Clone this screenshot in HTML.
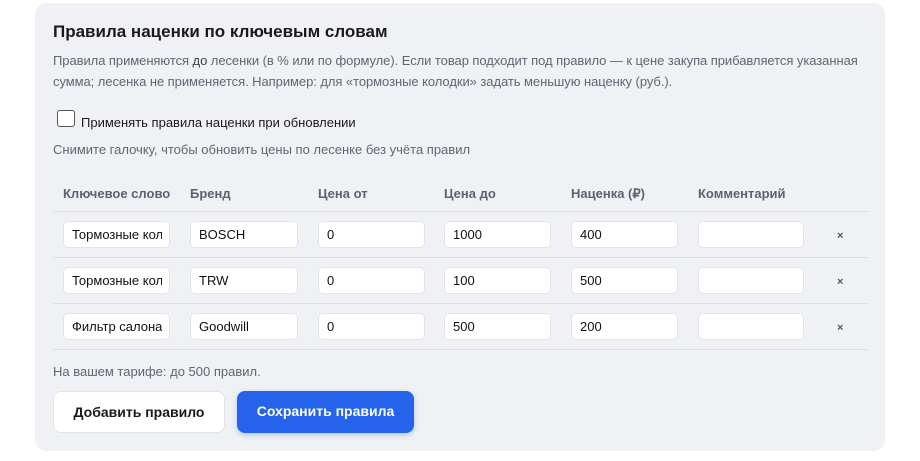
<!DOCTYPE html>
<html><head><meta charset="utf-8"><style>
*{box-sizing:border-box;margin:0;padding:0}
body{width:920px;height:461px;background:#fff;font-family:"Liberation Sans",Arial,sans-serif;position:relative;overflow:hidden}
.panel{position:absolute;left:35px;top:3px;width:850px;height:448px;background:#f0f1f5;border-radius:12px}
.a{position:absolute;white-space:nowrap}
h1{position:absolute;left:53px;top:22px;font-size:17px;font-weight:bold;color:#1a1a1a}
.desc{font-size:13px;color:#5f6672;line-height:21px;left:53px;top:50px;letter-spacing:-0.06px}
.desc b{color:#3d434d;font-weight:normal}
.cb{position:absolute;left:57px;top:110px;width:18px;height:17px;border:1px solid #555;border-radius:3px;background:#fff}
.th{font-size:13px;font-weight:bold;color:#5b6270;top:186px}
.line{position:absolute;left:53px;width:815px;height:1px;background:#dcdee3}
.in{position:absolute;height:27px;background:#fff;border:1px solid #e2e4e8;border-radius:5px;font-size:13px;color:#111;padding:0 7px 0 8px;line-height:25px;white-space:nowrap}
.in span{display:block;overflow:hidden}
.x{font-size:11px;color:#555;font-weight:bold}
.btn{position:absolute;top:391px;height:42px;border-radius:8px;font-size:14px;font-weight:bold;text-align:center;line-height:40px}
</style></head><body>
<div class="panel"></div>
<h1>Правила наценки по ключевым словам</h1>
<div class="a desc">Правила применяются <b>до</b> лесенки (в % или по формуле). Если товар подходит под правило — к цене закупа прибавляется указанная<br>сумма; лесенка не применяется. Например: для «тормозные колодки» задать меньшую наценку (руб.).</div>
<div class="cb"></div>
<div class="a" style="left:81px;top:115px;font-size:13px;color:#1a1a1a">Применять правила наценки при обновлении</div>
<div class="a" style="left:53px;top:142px;font-size:13px;color:#5f6672">Снимите галочку, чтобы обновить цены по лесенке без учёта правил</div>
<div class="a th" style="left:63px">Ключевое слово</div>
<div class="a th" style="left:190px">Бренд</div>
<div class="a th" style="left:318px">Цена от</div>
<div class="a th" style="left:444px">Цена до</div>
<div class="a th" style="left:571px">Наценка (₽)</div>
<div class="a th" style="left:698px">Комментарий</div>
<div class="line" style="top:211px"></div>
<div class="line" style="top:257px"></div>
<div class="line" style="top:303px"></div>
<div class="line" style="top:349px"></div>

<div class="in" style="left:63px;top:221px;width:107px"><span>Тормозные колодки</span></div>
<div class="in" style="left:190px;top:221px;width:108px"><span>BOSCH</span></div>
<div class="in" style="left:318px;top:221px;width:107px"><span>0</span></div>
<div class="in" style="left:444px;top:221px;width:107px"><span>1000</span></div>
<div class="in" style="left:571px;top:221px;width:107px"><span>400</span></div>
<div class="in" style="left:698px;top:221px;width:106px"></div>
<div class="a x" style="left:837px;top:230px">×</div>

<div class="in" style="left:63px;top:267px;width:107px"><span>Тормозные колодки</span></div>
<div class="in" style="left:190px;top:267px;width:108px"><span>TRW</span></div>
<div class="in" style="left:318px;top:267px;width:107px"><span>0</span></div>
<div class="in" style="left:444px;top:267px;width:107px"><span>100</span></div>
<div class="in" style="left:571px;top:267px;width:107px"><span>500</span></div>
<div class="in" style="left:698px;top:267px;width:106px"></div>
<div class="a x" style="left:837px;top:276px">×</div>

<div class="in" style="left:63px;top:313px;width:107px"><span>Фильтр салона</span></div>
<div class="in" style="left:190px;top:313px;width:108px"><span>Goodwill</span></div>
<div class="in" style="left:318px;top:313px;width:107px"><span>0</span></div>
<div class="in" style="left:444px;top:313px;width:107px"><span>500</span></div>
<div class="in" style="left:571px;top:313px;width:107px"><span>200</span></div>
<div class="in" style="left:698px;top:313px;width:106px"></div>
<div class="a x" style="left:837px;top:322px">×</div>

<div class="a" style="left:53px;top:364px;font-size:13px;color:#5f6672">На вашем тарифе: до 500 правил.</div>
<div class="btn" style="left:53px;width:172px;background:#fff;border:1px solid #e2e4e8;color:#1a1a1a">Добавить правило</div>
<div class="btn" style="left:237px;width:177px;background:#2563eb;color:#fff;box-shadow:0 2px 6px rgba(37,99,235,.3)">Сохранить правила</div>
</body></html>
